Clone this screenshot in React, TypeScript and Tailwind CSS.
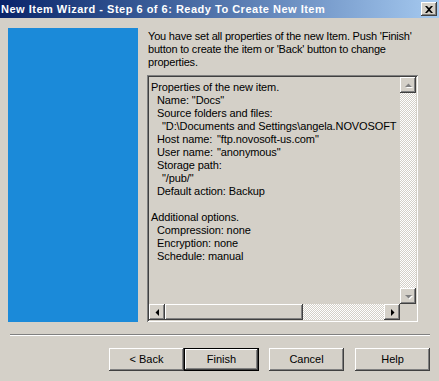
const raised =
  "shadow-[inset_-1px_-1px_#404040,inset_1px_1px_#ffffff,inset_-2px_-2px_#808080,inset_2px_2px_#d4d0c8]";
const dither =
  "bg-[image:repeating-conic-gradient(#ffffff_0%_25%,#d4d0c8_0%_50%)] bg-[length:2px_2px]";

function Arrow({ dir, disabled }: { dir: "up" | "down" | "left" | "right"; disabled?: boolean }) {
  const pts: Record<string, string> = {
    up: "1,5 8,5 4.5,1.5",
    down: "1,2 8,2 4.5,5.5",
    left: "5,1 5,8 1.5,4.5",
    right: "2,1 2,8 5.5,4.5",
  };
  const vertical = dir === "up" || dir === "down";
  return (
    <div className={`flex h-[16px] w-[16px] shrink-0 items-center justify-center bg-[#d4d0c8] ${raised}`}>
      <svg width={vertical ? 9 : 7} height={vertical ? 7 : 9} viewBox={vertical ? "0 0 9 7" : "0 0 7 9"}>
        {disabled && <polygon points={pts[dir]} fill="#ffffff" transform="translate(1,1)" />}
        <polygon points={pts[dir]} fill={disabled ? "#808080" : "#000000"} />
      </svg>
    </div>
  );
}

function Button({ label, primary }: { label: string; primary?: boolean }) {
  return (
    <div className={`h-[23px] w-[75px] ${primary ? "border border-black" : ""}`}>
      <div className={`flex h-full w-full items-center justify-center bg-[#d4d0c8] text-[11px] text-black ${raised}`}>
        {label}
      </div>
    </div>
  );
}

const lines: { text: string; indent?: number; value?: string }[] = [
  { text: "Properties of the new item." },
  { text: 'Name: "Docs"', indent: 6 },
  { text: "Source folders and files:", indent: 6 },
  { text: '"D:\\Documents and Settings\\angela.NOVOSOFT', indent: 11 },
  { text: "Host name:", indent: 6, value: '"ftp.novosoft-us.com"' },
  { text: "User name:", indent: 6, value: '"anonymous"' },
  { text: "Storage path:", indent: 6 },
  { text: '"/pub/"', indent: 11 },
  { text: "Default action: Backup", indent: 6 },
  { text: "" },
  { text: "Additional options." },
  { text: "Compression: none", indent: 6 },
  { text: "Encryption: none", indent: 6 },
  { text: "Schedule: manual", indent: 6 },
];

export default function App() {
  return (
    <div className="flex h-[381px] w-[439px] flex-col overflow-hidden bg-[#d4d0c8] font-['Liberation_Sans',Arial,sans-serif] text-[11px] text-black">
      {/* title bar */}
      <div className="flex h-[18px] shrink-0 items-center justify-between bg-gradient-to-r from-[#0a246a] to-[#a6caf0] pl-[1px] pr-[2px]">
        <span className="whitespace-nowrap text-[11px] font-bold leading-none tracking-[0.5px] text-white">
          New Item Wizard - Step 6 of 6: Ready To Create New Item
        </span>
        <div className={`flex h-[14px] w-[16px] items-center justify-center bg-[#d4d0c8] ${raised}`}>
          <svg width="8" height="7" viewBox="0 0 8 7">
            <path d="M0 0h2l2 2 2-2h2L5 3.5 8 7H6L4 5 2 7H0l3-3.5z" fill="#000" />
          </svg>
        </div>
      </div>

      {/* body */}
      <div className="flex pl-[8px] pt-[10px]">
        <div className="h-[294px] w-[130px] shrink-0 bg-[#1b8ad9]" />
        <div className="ml-[10px] flex w-[270px] flex-col">
          <p className="mt-[2px] whitespace-nowrap leading-[13px] tracking-[-0.2px]">
            You have set all properties of the new Item. Push 'Finish'
            <br />
            button to create the item or 'Back' button to change
            <br />
            properties.
          </p>
          <div className="ml-[-1px] mt-[6px] h-[247px] p-[2px] shadow-[inset_1px_1px_#808080,inset_-1px_-1px_#ffffff,inset_2px_2px_#404040,inset_-2px_-2px_#d4d0c8]">
            <div className="grid h-full grid-cols-[1fr_16px] grid-rows-[1fr_16px]">
              <div className="overflow-hidden pl-[2px] pt-[4px] tracking-[-0.1px]">
                {lines.map((l, i) => (
                  <div key={i} className="h-[13px] whitespace-pre leading-[13px]" style={{ paddingLeft: l.indent ?? 0 }}>
                    {l.value ? (
                      <>
                        <span className="inline-block w-[60px] whitespace-nowrap">{l.text}</span>
                        {l.value}
                      </>
                    ) : (
                      l.text
                    )}
                  </div>
                ))}
              </div>
              <div className="flex flex-col">
                <Arrow dir="up" disabled />
                <div className={`flex-1 ${dither}`} />
                <Arrow dir="down" disabled />
              </div>
              <div className="flex">
                <Arrow dir="left" />
                <div className={`h-[16px] w-[138px] bg-[#d4d0c8] ${raised}`} />
                <div className={`flex-1 ${dither}`} />
                <Arrow dir="right" />
              </div>
              <div className="bg-[#d4d0c8]" />
            </div>
          </div>
        </div>
      </div>

      {/* separator */}
      <div className="ml-[10px] mt-[12px] h-[2px] w-[420px] border-b border-t border-b-white border-t-[#808080]" />

      {/* buttons */}
      <div className="mt-[12px] flex pl-[109px]">
        <Button label="< Back" />
        <Button label="Finish" primary />
        <div className="ml-[10px]">
          <Button label="Cancel" />
        </div>
        <div className="ml-[11px]">
          <Button label="Help" />
        </div>
      </div>
    </div>
  );
}
